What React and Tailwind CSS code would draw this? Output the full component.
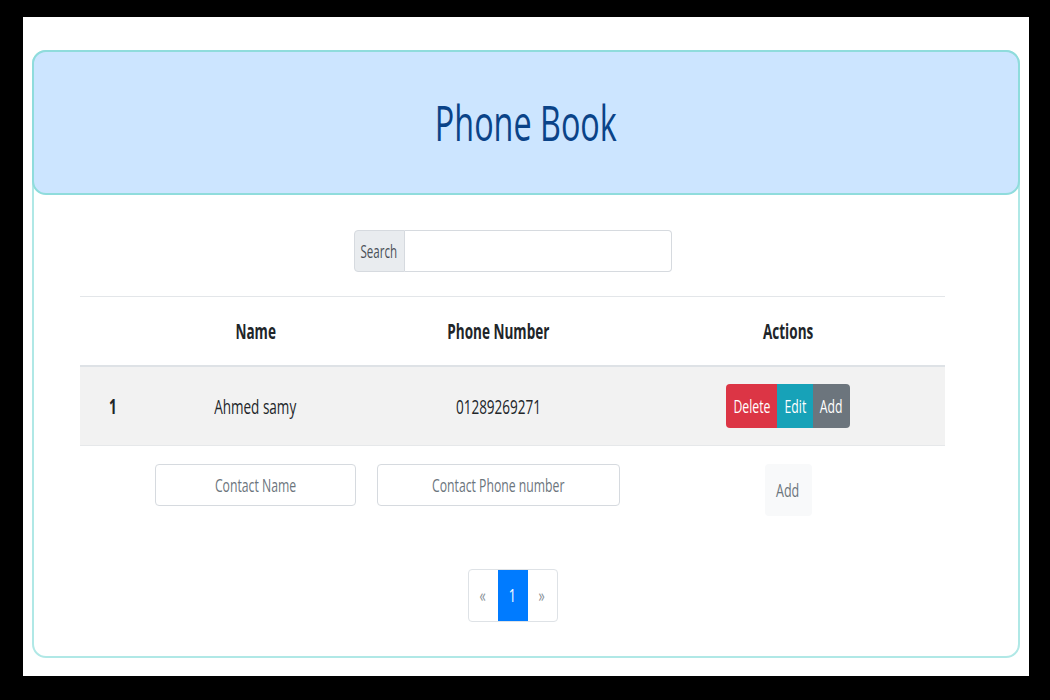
import React from 'react';

// the reference looks horizontally squeezed, so text gets a matching x-scale
const S = ({ children, className = '' }) => (
  <span className={`inline-block whitespace-nowrap scale-x-[0.66] ${className}`}>{children}</span>
);

const FakeInput = ({ placeholder, className = '' }) => (
  <div className={`relative h-[42px] rounded-[4px] border border-[#d6dadf] bg-white ${className}`}>
    <input className="h-full w-full bg-transparent outline-none" type="text" aria-label={placeholder} />
    <div className="pointer-events-none absolute inset-0 flex items-center justify-center text-[18.5px] text-[#6c757d]">
      <S>{placeholder}</S>
    </div>
  </div>
);

const App = () => {
  return (
    <div className="h-[700px] w-[1050px] bg-black pl-[23px] pt-[17px] font-['Open_Sans',sans-serif] text-[#212529]">
      <div className="h-[659px] w-[1006px] bg-white pl-[9px] pt-[33px]">
        <div className="flex h-[608px] w-[988px] flex-col rounded-[14px] border-2 border-[#b0e8e6]">
          <div className="-mx-[2px] -mt-[2px] flex h-[145px] items-center justify-center rounded-[14px] border-2 border-[#8fdcdc] bg-[#cce5ff]">
            <h1 className="text-[49px] leading-none text-[#0a4388]">
              <S>Phone Book</S>
            </h1>
          </div>

          <div className="ml-[46px] w-[865px]">
            <div className="mt-[35px] flex justify-center">
              <div className="flex h-[42px] w-[318px]">
                <div className="flex w-[51px] items-center justify-center rounded-l-[4px] border border-[#d6dadf] bg-[#e9ecef] text-[17.5px] text-[#495057]">
                  <S>Search</S>
                </div>
                <input className="flex-1 rounded-r-[4px] border border-l-0 border-[#d6dadf] bg-white outline-none" type="text" />
              </div>
            </div>

            <div className="mt-[24px] border-t border-[#e3e6e9]">
              <div className="grid h-[70px] grid-cols-[65px_221px_265px_314px] items-center border-b-2 border-[#dee2e6] text-center text-[20.5px] font-bold">
                <div></div>
                <div><S>Name</S></div>
                <div><S>Phone Number</S></div>
                <div><S>Actions</S></div>
              </div>

              <div className="grid h-[79px] grid-cols-[65px_221px_265px_314px] items-center border-b border-[#e6e8ea] bg-[#f2f2f2] text-center text-[20.5px]">
                <div className="font-bold"><S>1</S></div>
                <div><S>Ahmed samy</S></div>
                <div><S>01289269271</S></div>
                <div className="flex justify-center">
                  <div className="flex h-[44px] text-[18.5px] text-white">
                    <button className="flex w-[51px] items-center justify-center rounded-l-[4px] bg-[#dc3545]"><S>Delete</S></button>
                    <button className="flex w-[36px] items-center justify-center bg-[#17a2b8]"><S>Edit</S></button>
                    <button className="flex w-[37px] items-center justify-center rounded-r-[4px] bg-[#6c757d]"><S>Add</S></button>
                  </div>
                </div>
              </div>

              <div className="grid grid-cols-[65px_221px_265px_314px] items-start pt-[18px]">
                <div></div>
                <div className="px-[10px]">
                  <FakeInput placeholder="Contact Name" />
                </div>
                <div className="pl-[11px] pr-[11px]">
                  <FakeInput placeholder="Contact Phone number" />
                </div>
                <div className="flex justify-center">
                  <button className="flex h-[52px] w-[47px] items-center justify-center rounded-[4px] bg-[#f8f9fa] text-[19px] text-[#6c757d]">
                    <S>Add</S>
                  </button>
                </div>
              </div>
            </div>

            <div className="mt-[53px] flex justify-center">
              <div className="flex h-[53px] overflow-hidden rounded-[4px] border border-[#dee2e6] text-[19px]">
                <div className="flex w-[29px] items-center justify-center text-[#8a9299]"><S>«</S></div>
                <div className="flex w-[30px] items-center justify-center bg-[#007bff] text-white"><S>1</S></div>
                <div className="flex w-[29px] items-center justify-center text-[#8a9299]"><S>»</S></div>
              </div>
            </div>
          </div>
        </div>
      </div>
    </div>
  );
};

export default App;
